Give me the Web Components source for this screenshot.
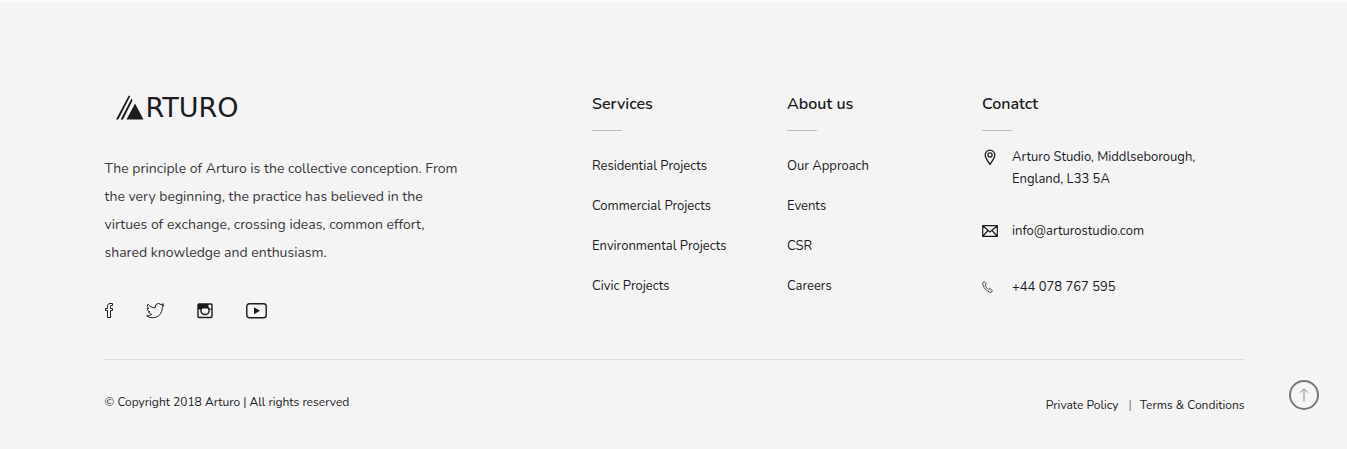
<!DOCTYPE html>
<html lang="en">
<head>
<meta charset="utf-8">
<title>Arturo</title>
<style>
html, body { margin: 0; min-height: 100%; background: #f4f4f4; }
body { font-family: Nunito, Lato, "Noto Sans", sans-serif; color: #1c1c1e; }
</style>
</head>
<body>
<site-footer>
  <footer-about slot="about">The principle of Arturo is the collective conception. From the very beginning, the practice has believed in the virtues of exchange, crossing ideas, common effort, shared knowledge and enthusiasm.</footer-about>
  <link-column slot="services" heading="Services">
    <footer-link>Residential Projects</footer-link>
    <footer-link>Commercial Projects</footer-link>
    <footer-link>Environmental Projects</footer-link>
    <footer-link>Civic Projects</footer-link>
  </link-column>
  <link-column slot="company" heading="About us">
    <footer-link>Our Approach</footer-link>
    <footer-link>Events</footer-link>
    <footer-link>CSR</footer-link>
    <footer-link>Careers</footer-link>
  </link-column>
  <contact-column slot="contact" heading="Conatct"></contact-column>
  <legal-bar slot="legal"></legal-bar>
</site-footer>
<back-to-top></back-to-top>
<script>
const define = (name, html, setup) => {
  const template = document.createElement('template');
  template.innerHTML = html;
  customElements.define(name, class extends HTMLElement {
    constructor() {
      super();
      this.attachShadow({ mode: 'open' }).append(template.content.cloneNode(true));
    }
    connectedCallback() { if (setup) setup(this, this.shadowRoot); }
  });
};
const setHeading = (host, root) => {
  root.querySelector('h2').textContent = host.getAttribute('heading');
};
const headingCss = `
  h2 { margin: 0; font-size: 16px; line-height: 24px; font-weight: 600; }
  h2::after { content: ""; display: block; width: 30px; height: 1px; margin-top: 14px; background: #bdbdbd; }`;

define('site-footer', `
<style>
  :host { display: block; border-top: 2px solid #fcfcfc; background: #f4f4f4; }
  footer { max-width: 1140px; margin: 0 auto; padding: 90px 16px 32px 18px; }
  .columns { display: grid; grid-template-columns: 5fr 2fr 2fr 3fr; margin-right: -30px; padding-bottom: 38px; }
</style>
<footer>
  <div class="columns">
    <slot name="about"></slot><slot name="services"></slot><slot name="company"></slot><slot name="contact"></slot>
  </div>
  <slot name="legal"></slot>
</footer>`);

define('brand-logo', `
<style>
  :host { display: block; }
  a { display: flex; align-items: center; height: 32px; padding-left: 11px; color: #1c1c1e; text-decoration: none; font: 27px/32px "DejaVu Sans", sans-serif; }
  svg { flex: none; }
</style>
<a href="#" aria-label="Arturo home">
  <svg width="30" height="26" viewBox="0 0 30 26" fill="#1c1c1e"><path d="M19 8.500 27.500 24.500H10.500zM12.700.5l1.500.8L2.300 24.500H0zM15.500 3.500l1 2L7 24.500H4.700z"/></svg>
  <span>RTURO</span>
</a>`);

define('social-links', `
<style>
  :host { display: block; }
  nav { display: flex; align-items: center; height: 20px; }
  a { display: flex; color: #1c1c1e; }
  .tw { margin-left: 33px; } .ig { margin-left: 32px; } .yt { margin-left: 33px; }
</style>
<nav aria-label="Social media">
  <a href="#" aria-label="Facebook"><svg width="8" height="16" viewBox="0 0 8 16" fill="none" stroke="currentColor"><path d="M2.500 14.500v-7h-2v-2h2V3.500c0-2 1-3 2.500-3h2.500v2H6c-.5 0-.5.300-.5 1v2h2v2h-2v7z"/></svg></a>
  <a class="tw" href="#" aria-label="Twitter"><svg width="19" height="16" viewBox="0 0 19 16" fill="none" stroke="currentColor"><path d="M.7 12.800c2 .1 3.600-.4 5-1.500-1.800-.2-2.700-1.200-3.200-2.400h1.500C2.200 8.100 1.300 7 1.300 5.300l1.500.4C1.300 4.300 1 2.800 1.900 1.200 4 3.600 6.200 4.700 9.200 4.900 8.700 2.400 10.300.6 12.500.6c1.200 0 2 .4 2.600 1.100l2.300-.9-1.300 1.900 1.700-.4-1.500 2C16.400 10 12.700 14.700 6.500 14.700c-2.200 0-4.100-.7-5.800-1.900z"/></svg></a>
  <a class="ig" href="#" aria-label="Instagram"><svg width="16" height="16" viewBox="0 0 16 16"><rect x="1" y="1" width="14" height="13.500" rx="1" fill="none" stroke="currentColor" stroke-width="1.400"/><path d="M1 1h10.500v4.500H15V6.500H1z" fill="currentColor"/><circle cx="8" cy="7.500" r="4.100" fill="#f4f4f4" stroke="currentColor" stroke-width="1.500"/><path d="M4.500 3.500h6.500v2H4.500z" fill="currentColor"/></svg></a>
  <a class="yt" href="#" aria-label="YouTube"><svg width="21" height="16" viewBox="0 0 21 16"><rect x=".8" y=".8" width="19.400" height="14" rx="2.500" fill="none" stroke="currentColor" stroke-width="1.400"/><path d="M8 4.300 14 7.800l-6 3.500z" fill="currentColor"/></svg></a>
</nav>`);

define('footer-about', `
<style>
  :host { display: block; }
  p { max-width: 360px; margin: 31px 0 34px; font-size: 14px; line-height: 28px; color: #38383a; }
</style>
<brand-logo></brand-logo>
<p><slot></slot></p>
<social-links></social-links>`);

define('footer-link', `
<style>
  :host { display: block; }
  a { color: inherit; text-decoration: none; font-size: 13px; line-height: 40px; }
</style>
<a href="#"><slot></slot></a>`);

define('link-column', `
<style>
  :host { display: block; }
  ${headingCss}
  nav { margin-top: 15px; }
</style>
<h2></h2><nav><slot></slot></nav>`, setHeading);

define('contact-column', `
<style>
  :host { display: block; }
  ${headingCss}
  address { display: grid; gap: 30px; margin-top: 15px; font-style: normal; font-size: 13px; line-height: 22px; }
  div { display: grid; grid-template-columns: 16px 1fr; gap: 14px; align-items: start; min-height: 26px; }
  a { color: inherit; text-decoration: none; }
</style>
<h2></h2>
<address>
  <div><svg width="16" height="22" viewBox="0 1 16 22" fill="none" stroke="#1c1c1e" stroke-width="1.300"><path d="M8 19.300C5.500 15.500 3.200 13 3.200 10a4.800 4.800 0 0 1 9.600 0c0 3-2.300 5.500-4.800 9.300z"/><circle cx="8" cy="10" r="2.100"/></svg><span>Arturo Studio, Middlseborough,<br>England, L33 5A</span></div>
  <div><svg width="16" height="22" viewBox="0 1 16 22" fill="none" stroke="#1c1c1e" stroke-width="1.200"><path d="M.7 6.700h14.600v10.600H.7zM1 7l7 6 7-6M1 17l5-5.500M15 17l-5-5.500"/></svg><a href="mailto:info@arturostudio.com">info@arturostudio.com</a></div>
  <div><svg width="16" height="22" viewBox="0 1 16 22" fill="none" stroke="#1c1c1e" stroke-width=".8"><path d="M2.300 6.500.8 7.800C.2 11.500 5 17.300 9 17.300l1.600-1.500-2.700-2.300-1.300 1C5.200 13.800 3.400 11.300 3.200 10l1.100-1.100z"/></svg><a href="tel:+44078767595">+44 078 767 595</a></div>
</address>`, setHeading);

define('legal-bar', `
<style>
  :host { display: flex; justify-content: space-between; border-top: 1px solid #dcdcdc; padding-top: 32px; font-size: 12px; line-height: 20px; }
  small { font-size: inherit; }
  nav { display: flex; margin-top: 3px; }
  a { color: inherit; text-decoration: none; }
  a + a { display: flex; }
  a + a::before { content: "|"; margin: 0 8px 0 10px; color: #777; }
</style>
<small>© Copyright 2018 Arturo | All rights reserved</small>
<nav aria-label="Legal"><a href="#">Private Policy</a><a href="#">Terms &amp; Conditions</a></nav>`);

define('back-to-top', `
<style>
  :host { position: fixed; right: 28px; bottom: 39px; }
  button { display: grid; place-items: center; width: 30px; height: 30px; padding: 0; border: 2px solid #777; border-radius: 50%; background: transparent; }
</style>
<button type="button" aria-label="Back to top"><svg width="10" height="14" viewBox="0 0 10 14" fill="none" stroke="#8e8e94"><path d="M5 13.500V1M1 4.500 5 1l4 3.500"/></svg></button>`,
(host, root) => root.querySelector('button').addEventListener('click', () => scrollTo({ top: 0, behavior: 'smooth' })));
</script>
</body>
</html>
